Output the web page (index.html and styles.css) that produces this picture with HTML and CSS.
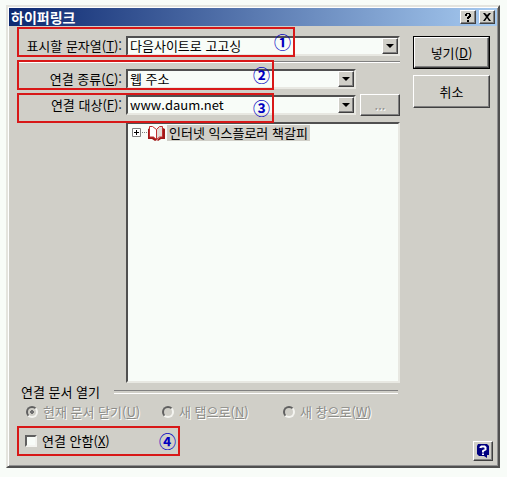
FILE: index.html
```
<!DOCTYPE html>
<html lang="ko">
<head>
  <meta charset="UTF-8">
  <meta name="viewport" content="width=device-width, initial-scale=1.0">
  <title>하이퍼링크</title>
  <link rel="stylesheet" href="styles.css">
</head>
<body>
  <div class="dialog">
    <div class="titlebar">
      <h1>하이퍼링크</h1>
      <button type="button" class="title-btn" aria-label="도움말">
        <svg width="8" height="9" viewBox="0 0 8 9"><path d="M1 3V1h1V0h4v1h1v3H6v1H5v1H3V4h1V3h1V1H3v2zM3 7h2v2H3z"/></svg>
      </button>
      <button type="button" class="title-btn" aria-label="닫기">
        <svg width="8" height="8" viewBox="0 0 8 8"><path d="M0 0h2l2 2 2-2h2L5 4l3 4H6L4 5 2 8H0l3-4z"/></svg>
      </button>
    </div>

    <form class="content">
      <div class="main">
        <!-- Link fields -->
        <div class="row">
          <label for="text">표시할 문자열(<u>T</u>):</label>
          <div class="combo">
            <select id="text"><option>다음사이트로 고고싱</option></select>
            <span class="arrow"></span>
          </div>
          <span class="mark mark-high mark-wide">①</span>
        </div>
        <hr>
        <div class="row">
          <label for="kind">연결 종류(<u>C</u>):</label>
          <div class="combo">
            <select id="kind"><option>웹 주소</option></select>
            <span class="arrow"></span>
          </div>
          <span class="spacer"></span>
          <span class="mark mark-high">②</span>
        </div>
        <div class="row">
          <label for="target">연결 대상(<u>F</u>):</label>
          <div class="combo">
            <select id="target"><option>www.daum.net</option></select>
            <span class="arrow"></span>
          </div>
          <button type="button" class="btn browse" disabled>...</button>
          <span class="mark mark-low">③</span>
        </div>

        <!-- Bookmark tree -->
        <div class="tree">
          <div class="tree-item">
            <svg width="35" height="16" viewBox="0 0 35 16">
              <path d="M.5 3.5h8v8h-8z" fill="#fff" stroke="#808080"/>
              <path d="M2 7.5h5M4.5 5v5" stroke="#000"/>
              <path d="M10 7.5h6" stroke="#808080" stroke-dasharray="1 1"/>
              <path d="M16 4l2-1v9h4l3 3-2 1-3-2h-4z" fill="#a01818"/>
              <path d="M31 3l2 1v10h-4l-3 2-1-1 3-3h3z" fill="#a01818"/>
              <path d="M17.5 1.500h3l4 3v10l-3-2.500h-4z" fill="#fff" stroke="#c03030"/>
              <path d="M24.500 4.500l3-3h3v10.500h-3l-3 2.500z" fill="#e4dcd8" stroke="#c03030"/>
            </svg>
            <span class="tree-label">인터넷 익스플로러 책갈피</span>
          </div>
        </div>

        <!-- Open mode -->
        <fieldset disabled>
          <legend>연결 문서 열기</legend>
          <div class="modes">
            <label><input type="radio" name="mode" checked>현재 문서 닫기(<u>U</u>)</label>
            <label><input type="radio" name="mode">새 탭으로(<u>N</u>)</label>
            <label><input type="radio" name="mode">새 창으로(<u>W</u>)</label>
          </div>
        </fieldset>

        <div class="row nolink">
          <label><input type="checkbox">연결 안함(<u>X</u>)</label>
          <span class="mark mark-short">④</span>
        </div>
      </div>

      <div class="side">
        <button type="submit" class="btn default">넣기(<u>D</u>)</button>
        <button type="button" class="btn">취소</button>
        <button type="button" class="help" aria-label="도움말">
          <svg width="14" height="15" viewBox="0 0 14 15">
            <path d="M2 0h9l2 2v9h-2v3L8 12H3l-2-2V2z" fill="#000080"/>
            <path d="M4.500 4V3.500L5.500 2.500h3L9.500 3.500v2L7 7v1.500M7 9.500v1.500" fill="none" stroke="#fff" stroke-width="2"/>
          </svg>
        </button>
      </div>
    </form>
  </div>
</body>
</html>
```
FILE: styles.css
```
* {
  box-sizing: border-box;
}

body {
  margin: 0;
  padding: 5px 7px 9px 6px;
  background: #f8fcf8;
  color: #000;
  font: 13px/18px "Noto Sans CJK KR", sans-serif;
}

button,
select {
  font: inherit;
  color: inherit;
}

button {
  padding: 0;
  background: #d0cfc8;
  border: 1px solid;
  border-color: #fff #404040 #404040 #fff;
  box-shadow: inset -1px -1px #808080;
}

.dialog {
  padding: 1px;
  background: #d0cfc8;
  border: 2px solid;
  border-color: #e4e4de #505050 #505050 #e4e4de;
  box-shadow: inset 1px 1px #fff, inset -1px -1px #909090;
}

/* Title bar */
.titlebar {
  display: flex;
  align-items: center;
  gap: 3px;
  height: 18px;
  padding: 0 2px;
  background: linear-gradient(to right, #0c2870, #a6caf0);
}

.titlebar h1 {
  flex: 1;
  margin: 0;
  font-size: 14px;
  line-height: 18px;
  color: #fff;
}

.title-btn {
  display: flex;
  align-items: center;
  justify-content: center;
  width: 16px;
  height: 14px;
}

/* Content */
.content {
  display: flex;
  gap: 13px;
  padding: 10px 4px 4px 10px;
}

.main {
  flex: 1;
}

.row {
  position: relative;
  display: flex;
  align-items: center;
  gap: 4px;
  margin-bottom: 5px;
}

.row > label:first-child {
  flex: none;
  width: 103px;
  text-align: right;
}

hr {
  height: 2px;
  margin: 0 0 6px;
  border: 0;
  border-top: 1px solid #808080;
  border-bottom: 1px solid #fff;
}

.combo {
  flex: 1;
  position: relative;
  height: 20px;
  background: #f8fcf8;
  border: 2px solid;
  border-color: #505050 #e8e8e2 #e8e8e2 #505050;
}

.combo select {
  display: block;
  width: 100%;
  height: 16px;
  padding: 0 18px 0 2px;
  line-height: 16px;
  background: none;
  border: 0;
  appearance: none;
}

.arrow {
  position: absolute;
  top: 0;
  right: 0;
  width: 16px;
  height: 16px;
  background: #d0cfc8;
  border: 1px solid;
  border-color: #fff #404040 #404040 #fff;
  box-shadow: inset -1px -1px #808080;
  pointer-events: none;
}

.arrow::after {
  content: "";
  position: absolute;
  top: 5px;
  left: 3px;
  border: 4px solid transparent;
  border-top-color: #000;
  border-bottom: 0;
}

.spacer,
.browse {
  flex: none;
  width: 40px;
}

.browse {
  height: 22px;
}

.browse:disabled {
  color: #909090;
  text-shadow: 1px 1px #fff;
}

/* Numbered callouts */
.mark {
  position: absolute;
  top: 50%;
  left: -2px;
  width: 257px;
  height: 30px;
  margin-top: -15px;
  padding-right: 2px;
  border: 2px solid #d81818;
  color: #0000c0;
  font-size: 17px;
  font-weight: bold;
  line-height: 26px;
  text-align: right;
  pointer-events: none;
}

.mark-high {
  margin-top: -19px;
}

.mark-low {
  margin-top: -12px;
}

.mark-wide {
  width: 278px;
}

.mark-short {
  width: 163px;
}

/* Tree */
.tree {
  height: 261px;
  margin: 6px 0 0 107px;
  padding: 1px 4px;
  background: #f8fcf8;
  border: 2px solid;
  border-color: #505050 #e8e8e2 #e8e8e2 #505050;
}

.tree-item {
  display: flex;
  align-items: center;
}

.tree-label {
  padding: 0 2px;
  line-height: 16px;
  background: #d0cfc8;
}

/* Open mode */
fieldset {
  margin: 0;
  padding: 0;
  border: 0;
}

legend {
  display: flex;
  align-items: center;
  gap: 14px;
  width: 100%;
  padding: 0 2px;
}

legend::after {
  content: "";
  flex: 1;
  height: 2px;
  border-top: 1px solid #808080;
  border-bottom: 1px solid #fff;
}

.modes {
  display: grid;
  grid-template-columns: 136px 121px 1fr;
  padding: 2px 0 0 7px;
  color: #8c8c88;
  text-shadow: 1px 1px #fff;
}

.modes label,
.nolink label {
  display: flex;
  align-items: center;
}

input {
  flex: none;
  width: 12px;
  height: 12px;
  margin: 0 5px 0 0;
  appearance: none;
  border: 2px solid;
  border-color: #606060 #f4f4f0 #f4f4f0 #606060;
}

input[type="radio"] {
  border-radius: 50%;
}

input[type="radio"]:checked {
  background: radial-gradient(circle, #707070 2px, transparent 2px);
}

.nolink {
  margin: 11px 0;
  padding-left: 6px;
}

.nolink > label:first-child {
  width: auto;
}

input[type="checkbox"] {
  background: #f8fcf8;
}

/* Buttons */
.side {
  display: flex;
  flex-direction: column;
  gap: 6px;
}

.side .btn {
  width: 77px;
  height: 33px;
  margin-right: 3px;
}

.default {
  outline: 1px solid #000;
  outline-offset: -1px;
  border-width: 2px;
}

.help {
  display: flex;
  align-items: center;
  justify-content: center;
  width: 20px;
  height: 20px;
  margin-top: auto;
  margin-left: auto;
}
```
